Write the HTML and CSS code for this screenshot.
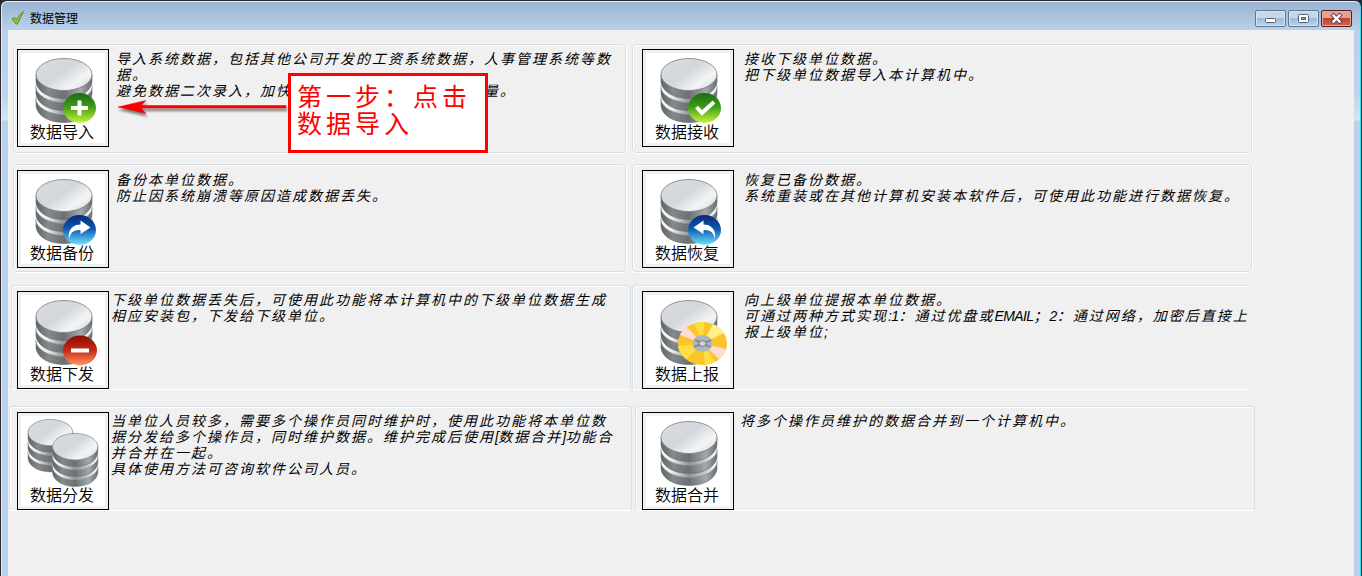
FILE: index.html
```html
<!DOCTYPE html>
<html lang="zh-CN">

<head>
    <meta charset="UTF-8">
    <meta name="viewport" content="width=device-width, initial-scale=1.0">
    <title>数据管理</title>
    <link rel="stylesheet" href="styles.css">
</head>

<body>
    <!-- shared icon parts -->
    <svg class="defs" width="0" height="0">
        <defs>
            <linearGradient id="side" x1="0" x2="1" y1="0" y2="0">
                <stop offset="0" stop-color="#5f6467" />
                <stop offset=".22" stop-color="#85898c" />
                <stop offset=".5" stop-color="#6a7074" />
                <stop offset=".8" stop-color="#a3a8ab" />
                <stop offset="1" stop-color="#696e71" />
            </linearGradient>
            <linearGradient id="rim" x1="0" x2="1" y1="0" y2="0">
                <stop offset="0" stop-color="#fff" />
                <stop offset=".2" stop-color="#eceeef" />
                <stop offset=".5" stop-color="#8f9497" />
                <stop offset=".75" stop-color="#bfc3c6" />
                <stop offset="1" stop-color="#fff" />
            </linearGradient>
            <linearGradient id="lid" x1="0" x2="1" y1="0" y2=".8">
                <stop offset="0" stop-color="#d9dcdf" />
                <stop offset=".5" stop-color="#d3d7db" />
                <stop offset=".8" stop-color="#f3f4f5" />
                <stop offset="1" stop-color="#dcdfe2" />
            </linearGradient>
            <linearGradient id="green" x1="0" x2="0" y1="0" y2="1">
                <stop offset="0" stop-color="#1d6a14" />
                <stop offset=".45" stop-color="#3c9a16" />
                <stop offset="1" stop-color="#c5f63c" />
            </linearGradient>
            <linearGradient id="blue" x1="0" x2="0" y1="0" y2="1">
                <stop offset="0" stop-color="#0a2a78" />
                <stop offset=".45" stop-color="#0d57ae" />
                <stop offset="1" stop-color="#6fe4ff" />
            </linearGradient>
            <linearGradient id="red" x1="0" x2="0" y1="0" y2="1">
                <stop offset="0" stop-color="#8c0d08" />
                <stop offset=".5" stop-color="#c62a14" />
                <stop offset="1" stop-color="#ff9a68" />
            </linearGradient>
            <path id="edge" d="M0 16.500V24C3 46 53 46 56 24V16.500Z" fill="url(#side)" stroke="#666b6e" stroke-width=".6" />
            <ellipse id="step" cx="28" cy="16.500" rx="28" ry="16" fill="url(#rim)" stroke="#8b9093" stroke-width=".5" />
            <g id="db">
                <use href="#edge" y="24" />
                <use href="#step" y="24" />
                <use href="#edge" y="12" />
                <use href="#step" y="12" />
                <use href="#edge" />
                <ellipse cx="28" cy="16.500" rx="28" ry="16" fill="url(#lid)" stroke="#797e81" stroke-width=".8" />
            </g>
            <path id="fwd" d="M-10.500 9C-12-1-6-5.500 1-5.500V-9.500L11-2.500L1 4V0C-5-.5-9 2-10.500 9Z" fill="#fff" />
        </defs>
    </svg>

    <div class="window">
        <div class="titlebar">
            <svg class="app-icon" width="14" height="14" viewBox="0 0 14 14">
                <path d="M1 8L3.500 6.500L5.500 9C7 5.500 9 3 12.500.5C10.500 4.500 8.500 8.500 6.500 13H5Z" fill="#8cc63a" stroke="#5c8d20" />
            </svg>
            <div class="title">数据管理</div>
            <div class="win-buttons">
                <div class="win-btn">
                    <svg width="29" height="15" viewBox="0 0 29 15"><rect x="9.500" y="7.500" width="10" height="4" rx="1" fill="#fff" stroke="#555e70" /></svg>
                </div>
                <div class="win-btn">
                    <svg width="29" height="15" viewBox="0 0 29 15"><rect x="9.500" y="3.500" width="10" height="8" rx="1" fill="#fff" stroke="#555e70" /><rect x="12.500" y="6.500" width="4" height="2" fill="#8aa8cc" stroke="#555e70" /></svg>
                </div>
                <div class="win-btn close">
                    <svg width="29" height="15" viewBox="0 0 29 15"><path d="M11.500 4.500L17.500 10.500M17.500 4.500L11.500 10.500" stroke="#5d4b59" stroke-width="4.400" stroke-linecap="square" /><path d="M11.500 4.500L17.500 10.500M17.500 4.500L11.500 10.500" stroke="#fff" stroke-width="2.400" stroke-linecap="square" /></svg>
                </div>
            </div>
        </div>

        <div class="content">
            <div class="row row1">
                <div class="group g-import">
                    <div class="tile">
                        <svg width="86" height="92" viewBox="0 0 86 92">
                            <use href="#db" x="16" y="6" />
                            <ellipse cx="59.500" cy="56" rx="16.500" ry="15" fill="url(#green)" />
                            <path d="M51 56H68M59.500 48.500V63.500" stroke="#fff" stroke-width="4" />
                        </svg>
                        <div class="label">数据导入</div>
                    </div>
                    <div class="desc">导入系统数据，包括其他公司开发的工资系统数据，人事管理系统等数<br>据。<br>避免数据二次录入，加快<span class="covered"></span>量。</div>
                </div>
                <div class="group g-receive">
                    <div class="tile">
                        <svg width="86" height="92" viewBox="0 0 86 92">
                            <use href="#db" x="16" y="6" />
                            <ellipse cx="59.500" cy="56" rx="16.500" ry="15" fill="url(#green)" />
                            <path d="M51.500 55L57 61L69 50" fill="none" stroke="#fff" stroke-width="4" />
                        </svg>
                        <div class="label">数据接收</div>
                    </div>
                    <div class="desc">接收下级单位数据。<br>把下级单位数据导入本计算机中。</div>
                </div>
            </div>

            <div class="row row2">
                <div class="group g-backup">
                    <div class="tile">
                        <svg width="86" height="92" viewBox="0 0 86 92">
                            <use href="#db" x="16" y="6" />
                            <ellipse cx="59.500" cy="57" rx="16.500" ry="15" fill="url(#blue)" />
                            <use href="#fwd" x="59.500" y="57" />
                        </svg>
                        <div class="label">数据备份</div>
                    </div>
                    <div class="desc">备份本单位数据。<br>防止因系统崩溃等原因造成数据丢失。</div>
                </div>
                <div class="group g-restore">
                    <div class="tile">
                        <svg width="86" height="92" viewBox="0 0 86 92">
                            <use href="#db" x="16" y="6" />
                            <ellipse cx="59.500" cy="57" rx="16.500" ry="15" fill="url(#blue)" />
                            <use href="#fwd" transform="translate(59.500 57) scale(-1 1)" />
                        </svg>
                        <div class="label">数据恢复</div>
                    </div>
                    <div class="desc">恢复已备份数据。<br>系统重装或在其他计算机安装本软件后，可使用此功能进行数据恢复。</div>
                </div>
            </div>

            <div class="row row3">
                <div class="group g-issue">
                    <div class="tile">
                        <svg width="86" height="92" viewBox="0 0 86 92">
                            <use href="#db" x="16" y="6" />
                            <ellipse cx="60" cy="56.500" rx="17" ry="15" fill="url(#red)" />
                            <path d="M51 56.500H69" stroke="#fff" stroke-width="4" />
                        </svg>
                        <div class="label">数据下发</div>
                    </div>
                    <div class="desc">下级单位数据丢失后，可使用此功能将本计算机中的下级单位数据生成<br>相应安装包，下发给下级单位。</div>
                </div>
                <div class="group g-report">
                    <div class="tile">
                        <svg width="86" height="92" viewBox="0 0 86 92">
                            <use href="#db" x="16" y="6" />
                            <ellipse cx="57.500" cy="49.500" rx="24.500" ry="21.500" fill="#fbc529" />
                            <path d="M57.500 49.500L49 29.500Q53 28 59 28ZM57.500 49.500L33 52Q34 60 41 65ZM57.500 49.500L60 71Q66 70 70 68Z" fill="#ffde45" />
                            <path d="M57.500 49.500L35 41Q37 36 42 33ZM57.500 49.500L81 55Q79 61 74 65Z" fill="#ffdcd0" />
                            <path d="M57.500 49.500L68 30Q75 33 79 39Z" fill="#fff08a" />
                            <ellipse cx="57.500" cy="49.500" rx="10" ry="8.500" fill="#aeb6c0" />
                            <path d="M49 53L66 46M50 46L65 53" stroke="#878d96" stroke-width="2" />
                            <ellipse cx="57.500" cy="49.500" rx="3.500" ry="3" fill="#d4d5d4" stroke="#74797e" />
                        </svg>
                        <div class="label">数据上报</div>
                    </div>
                    <div class="desc">向上级单位提报本单位数据。<br>可通过两种方式实现<span class="latin">:1</span>：通过优盘或<span class="latin">EMAIL</span>；<span class="latin">2</span>：通过网络，加密后直接上<br>报上级单位<span class="latin">;</span></div>
                </div>
            </div>

            <div class="row row4">
                <div class="group g-share">
                    <div class="tile">
                        <svg width="86" height="92" viewBox="0 0 86 92">
                            <use href="#db" transform="translate(8 4) scale(.8 .82)" />
                            <use href="#db" transform="translate(32.500 18) scale(.81 .83)" />
                        </svg>
                        <div class="label">数据分发</div>
                    </div>
                    <div class="desc">当单位人员较多，需要多个操作员同时维护时，使用此功能将本单位数<br>据分发给多个操作员，同时维护数据。维护完成后使用<span class="latin">[</span>数据合并<span class="latin">]</span>功能合<br>并合并在一起。<br>具体使用方法可咨询软件公司人员。</div>
                </div>
                <div class="group g-merge">
                    <div class="tile">
                        <svg width="86" height="92" viewBox="0 0 86 92">
                            <use href="#db" x="16" y="6" />
                        </svg>
                        <div class="label">数据合并</div>
                    </div>
                    <div class="desc">将多个操作员维护的数据合并到一个计算机中。</div>
                </div>
            </div>
        </div>
    </div>

    <!-- step hint over the first group -->
    <svg class="arrow" width="180" height="26" viewBox="0 0 180 26">
        <path d="M4 11L32 4.500L27 9.500H172V12H27L32 17.500Z" fill="#f00" stroke="#d00" stroke-width=".5" />
    </svg>
    <div class="hint">第一步：点击<br>数据导入</div>
</body>

</html>
```
FILE: styles.css
```css
* {
    box-sizing: border-box;
}

body {
    margin: 0;
    height: 576px;
    overflow: hidden;
    background-color: #2a2733;
    font-family: "Liberation Sans", "Noto Sans CJK SC", sans-serif;
    color: #000;
}

.defs {
    position: absolute;
}

.window {
    height: 576px;
    margin: 1px 1px 0;
    padding: 0 6px;
    border: 1px solid #e4f0fa;
    border-right-color: #3fd8f4;
    border-bottom: none;
    border-radius: 6px 6px 0 0;
    background: linear-gradient(#99b4d1, #b9d1ea 28px, #bcd3ec 90px, #d5e5f5 118px, #b9d1ea 119px);
}

.titlebar {
    display: flex;
    height: 28px;
    padding: 0 2px 0 3px;
}

.app-icon {
    margin-top: 9px;
}

.title {
    flex: 1;
    margin: 8px 0 0 5px;
    font-size: 12px;
    line-height: 18px;
}

.win-buttons {
    display: flex;
    gap: 2px;
    margin-top: 8px;
}

.win-btn {
    width: 31px;
    height: 17px;
    border: 1px solid #5f7590;
    border-radius: 2px;
    background: linear-gradient(#c4d7eb 45%, #9fbbd9 50%, #b9d3ec);
    box-shadow: inset 0 0 0 1px #d5e4f3;
}

.win-btn svg {
    display: block;
}

.close {
    border-color: #571c23;
    background: linear-gradient(#e5a095 45%, #c1402b 50%, #d3664c);
    box-shadow: inset 0 0 0 1px #e9a99c;
}

.content {
    height: 546px;
    padding-top: 14px;
    background-color: #f0f0f0;
}

.row {
    display: flex;
}

.row1 {
    height: 120px;
    padding-left: 5px;
    gap: 6px;
}

.row2 {
    height: 121px;
    padding-left: 5px;
    gap: 6px;
}

.row3 {
    height: 121px;
    padding-left: 3px;
    gap: 1px;
}

.row4 {
    padding-left: 1px;
    gap: 3px;
}

.group {
    display: flex;
    height: 109px;
    border: 1px solid #d5dfe5;
    border-radius: 4px;
    box-shadow: inset 1px 1px #fff, 0 1px #fff, 1px 0 #fff;
}

.row2 .group {
    height: 108px;
}

.row3 .group,
.row4 .group {
    height: 105px;
    border-bottom-color: #fff;
    box-shadow: inset 1px 1px #fff;
}

.row1 .group:first-child,
.row2 .group:first-child {
    width: 613px;
    padding-left: 3px;
}

.row1 .group:last-child,
.row2 .group:last-child,
.row3 .group:last-child {
    width: 620px;
    padding-left: 9px;
}

.row3 .group:first-child {
    width: 620px;
    padding-left: 5px;
}

.row3 .group:last-child {
    border-right-color: transparent;
}

.row4 .group:first-child {
    width: 623px;
    padding-left: 7px;
}

.row4 .group:last-child {
    width: 620px;
    padding-left: 6px;
}

.tile {
    display: flex;
    flex: none;
    flex-direction: column;
    align-items: center;
    width: 92px;
    height: 98px;
    margin-top: 4px;
    border: 1px solid #000;
    background-color: #fff;
    box-shadow: inset 0 0 0 3px #f0f0f0;
}

.row2 .tile,
.row3 .tile,
.row4 .tile {
    margin-top: 5px;
}

.tile svg {
    flex: none;
    margin: 2px 0 -21px;
}

.label {
    position: relative;
    margin-right: 2px;
    font-size: 16px;
    font-weight: 350;
    line-height: 20px;
    white-space: nowrap;
}

.desc {
    margin: 6px 0 0 7px;
    font-size: 14px;
    font-style: italic;
    line-height: 16px;
    letter-spacing: 2px;
    white-space: nowrap;
}

.row2 .desc {
    margin-top: 7px;
}

.latin {
    line-height: 0;
    letter-spacing: -.6px;
}

/* stretch of the line that lies under the hint box */
.covered {
    display: inline-block;
    width: 192px;
}

.g-receive .desc,
.g-restore .desc,
.g-report .desc {
    margin-left: 10px;
}

.g-issue .desc,
.g-share .desc {
    margin-left: 2px;
}

.g-merge .desc {
    margin-left: 6px;
}

.arrow {
    position: absolute;
    left: 114px;
    top: 96px;
    filter: drop-shadow(1px 3px 1px rgba(0, 0, 0, .45));
}

.hint {
    position: absolute;
    left: 288px;
    top: 73px;
    width: 200px;
    height: 80px;
    padding: 8px 6px;
    border: 3px solid #f00;
    background-color: #fff;
    color: #f00;
    font-size: 25px;
    line-height: 27px;
    letter-spacing: 4px;
    white-space: nowrap;
}
```
